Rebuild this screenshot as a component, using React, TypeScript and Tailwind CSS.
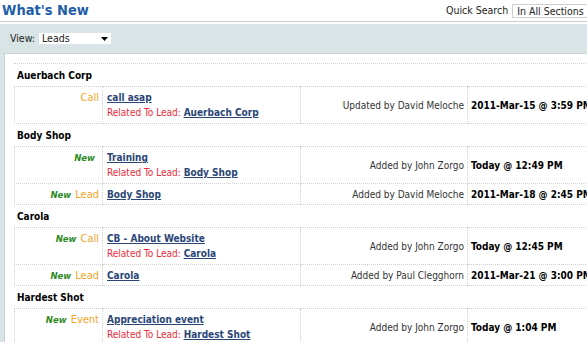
import React from "react";

type Item = {
  isNew?: boolean;
  kind?: string;
  title: string;
  related?: string;
  by: string;
  when: string;
};

type Group = { name: string; items: Item[] };

const GROUPS: Group[] = [
  {
    name: "Auerbach Corp",
    items: [
      { kind: "Call", title: "call asap", related: "Auerbach Corp", by: "Updated by David Meloche", when: "2011-Mar-15 @ 3:59 PM" },
    ],
  },
  {
    name: "Body Shop",
    items: [
      { isNew: true, title: "Training", related: "Body Shop", by: "Added by John Zorgo", when: "Today @ 12:49 PM" },
      { isNew: true, kind: "Lead", title: "Body Shop", by: "Added by David Meloche", when: "2011-Mar-18 @ 2:45 PM" },
    ],
  },
  {
    name: "Carola",
    items: [
      { isNew: true, kind: "Call", title: "CB - About Website", related: "Carola", by: "Added by John Zorgo", when: "Today @ 12:45 PM" },
      { isNew: true, kind: "Lead", title: "Carola", by: "Added by Paul Clegghorn", when: "2011-Mar-21 @ 3:00 PM" },
    ],
  },
  {
    name: "Hardest Shot",
    items: [
      { isNew: true, kind: "Event", title: "Appreciation event", related: "Hardest Shot", by: "Added by John Zorgo", when: "Today @ 1:04 PM" },
    ],
  },
];

const cell = "border border-dotted border-[#cfcfcf] align-middle";

const Row = ({ item }: { item: Item }) => (
  <tr>
    <td className={`${cell} w-[88px] align-top text-right pr-[3px] pt-[3px] pb-[2px] whitespace-nowrap`}>
      <div className="h-[15px] flex items-center justify-end">
        {item.isNew && <span className="italic font-bold text-[9.5px] leading-[15px] text-[#2d8a1f] mr-[4px]">New</span>}
        {item.kind && <span className="text-[11px] leading-[15px] text-[#f2a42a]">{item.kind}</span>}
      </div>
    </td>
    <td className={`${cell} w-[198px] border-r-0 pl-[4px] pt-[3px] pb-[2px] whitespace-nowrap`}>
      <div>
        <a className="font-bold text-[#2a4677] underline">{item.title}</a>
      </div>
      {item.related && (
        <div className="leading-[16px]">
          <span className="text-[#ee2b3b]">Related To Lead: </span>
          <a className="font-bold text-[#2a4677] underline">{item.related}</a>
        </div>
      )}
    </td>
    <td className={`${cell} w-[167px] text-right pr-[3px] text-[#333] whitespace-nowrap`}>{item.by}</td>
    <td className={`${cell} pl-[3px] font-bold text-black whitespace-nowrap`}>{item.when}</td>
  </tr>
);

export default function App() {
  return (
    <div
      className="w-[587px] h-[342px] overflow-hidden bg-white text-[10px] leading-[15px] text-[#222]"
      style={{ fontFamily: '"DejaVu Sans Condensed", "DejaVu Sans", sans-serif' }}
    >
      <div className="w-[640px]">
        <header className="h-[22px] flex items-center justify-between border-b border-[#cccccc]">
          <h1 className="pl-[2px] text-[14.5px] font-bold text-[#1f5ea8]">What's New</h1>
          <div className="flex items-center w-[194px] text-[10.5px]">
            <span className="text-[#222]">Quick Search</span>
            <span className="ml-[4px] h-[14px] flex items-center px-[4px] border border-[#d0d0d0] leading-[12px]">
              In All Sections
            </span>
          </div>
        </header>

        <div className="mt-[2px] bg-[#d9e4e6] pl-[4px]">
          <div className="h-[29px] flex items-center pl-[6px] text-[10.5px]">
            <span>View:</span>
            <div className="ml-[4px] w-[72px] h-[11px] bg-white flex items-center justify-between pl-[3px] pr-[3px] leading-[11px]">
              <span>Leads</span>
              <svg width="7" height="4" viewBox="0 0 7 4">
                <path d="M0 0h7L3.5 4z" fill="#000" />
              </svg>
            </div>
          </div>

          <div className="bg-white h-[300px] border-t border-l border-[#c9d2d4] pl-[9px] pt-[9px]">
            <div className="border-t border-dotted border-[#cfcfcf]">
              {GROUPS.map((g) => (
                <div key={g.name}>
                  <div className="h-[22px] flex items-center pl-[3px] font-bold text-black">{g.name}</div>
                  <table className="w-full border-collapse">
                    <tbody>
                      {g.items.map((it, i) => (
                        <Row key={i} item={it} />
                      ))}
                    </tbody>
                  </table>
                </div>
              ))}
            </div>
          </div>
        </div>
      </div>
    </div>
  );
}
